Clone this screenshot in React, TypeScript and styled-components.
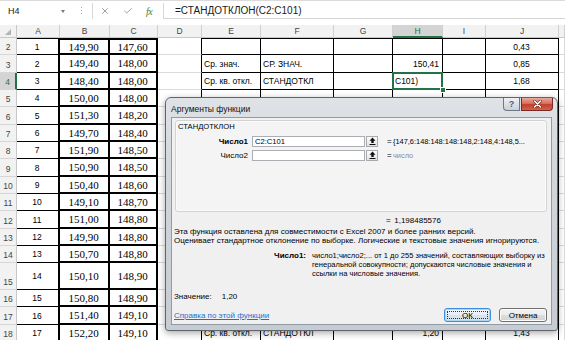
import React from "react";
import styled, { createGlobalStyle, css } from "styled-components";
import { X, Check } from "lucide-react";

const GlobalStyle = createGlobalStyle`
  html, body { margin: 0; padding: 0; background: #fff; }
  body { width: 565px; height: 340px; overflow: hidden; font-family: "Liberation Sans", Arial, sans-serif; }
  * { box-sizing: border-box; }
`;

const Screen = styled.div`
  position: relative;
  width: 565px;
  height: 340px;
  overflow: hidden;
  background: #fff;
  display: flex;
  flex-direction: column;
`;

/* ---------- formula bar ---------- */
const FormulaBar = styled.div`
  flex: none;
  height: 25px;
  display: flex;
  align-items: flex-start;
  padding-top: 2px;
  border-top: 1px solid #dadada;
  background: #fff;
`;
const NameBox = styled.div`
  width: 70px;
  height: 16px;
  display: flex;
  align-items: center;
  justify-content: space-between;
  padding: 0 5px 0 8px;
  font-size: 9px;
  color: #222;
`;
const DropArrow = styled.span`
  width: 0;
  height: 0;
  border-left: 2.5px solid transparent;
  border-right: 2.5px solid transparent;
  border-top: 3px solid #777;
`;
const Splitter = styled.div`
  width: 22px;
  height: 16px;
  display: flex;
  align-items: center;
  justify-content: center;
  &::before {
    content: "";
    width: 1px;
    height: 9px;
    background: repeating-linear-gradient(#a9a9a9 0 1px, transparent 1px 3px);
  }
`;
const FxBox = styled.div`
  width: 71px;
  height: 16px;
  display: flex;
  align-items: center;
  gap: 13px;
  padding-left: 7px;
  border-left: 1px solid #d6d6d6;
  color: #6f6f6f;
`;
const FxGlyph = styled.span`
  width: 11px;
  font-family: "Liberation Serif", serif;
  font-style: italic;
  font-size: 10px;
  color: #4d7a35;
  letter-spacing: -0.5px;
`;
const FormulaInput = styled.div`
  flex: 1;
  height: 16px;
  display: flex;
  align-items: center;
  padding-left: 11px;
  border-left: 1px solid #d6d6d6;
  border-bottom: 1px solid #d6d6d6;
  font-size: 10px;
  color: #1a1a1a;
`;

/* ---------- sheet ---------- */
const Grid = styled.div`
  display: grid;
  grid-template-columns: 17px 43px 50px 48px 44px 59px 73px 59px 50px 43px 73px 6px;
  grid-template-rows: 13px 17px 18px 17px 17px 18px 17px 17px 18px 17px 17px 18px 17px 17px 27px 17px 18px 17px;
`;

const HeaderBase = css`
  background: #f2f2f2;
  color: #444;
  font-size: 8.5px;
  display: flex;
  justify-content: center;
`;
const Corner = styled.div`
  ${HeaderBase};
  align-items: flex-end;
  justify-content: flex-end;
  padding: 0 5px 2px 0;
  border-right: 1px solid #c8c8c8;
  border-bottom: 1px solid #c8c8c8;
  &::after {
    content: "";
    width: 0;
    height: 0;
    border-left: 6px solid transparent;
    border-bottom: 6px solid #b4b4b4;
  }
`;
const ColHeader = styled.div<{ $active?: boolean }>`
  ${HeaderBase};
  align-items: center;
  border-right: 1px solid #d0d0d0;
  border-bottom: 1px solid #c8c8c8;
  ${(p) =>
    p.$active &&
    css`
      background: #d4d4d4;
      color: #217346;
      border-bottom: 2px solid #217346;
    `}
`;
const RowHeader = styled.div<{ $active?: boolean }>`
  ${HeaderBase};
  align-items: flex-end;
  padding-bottom: 2px;
  border-right: 1px solid #c8c8c8;
  border-bottom: 1px solid #d6d6d6;
  ${(p) =>
    p.$active &&
    css`
      background: #d4d4d4;
      color: #217346;
      border-right: 2px solid #217346;
    `}
`;

type Line = "grid" | "thin" | "thick" | "none";
const line = (b: Line) =>
  b === "thick" ? "2px solid #000" : b === "thin" ? "1px solid #000" : b === "grid" ? "1px solid #dadada" : "0";

const Cell = styled.div<{
  $r: Line;
  $b: Line;
  $t?: Line;
  $align?: "left" | "center" | "right";
  $serif?: boolean;
  $sel?: boolean;
}>`
  position: relative;
  display: flex;
  align-items: center;
  justify-content: ${(p) => (p.$align === "right" ? "flex-end" : p.$align === "center" ? "center" : "flex-start")};
  padding: 0 3px 0 2px;
  border-right: ${(p) => line(p.$r)};
  border-bottom: ${(p) => line(p.$b)};
  border-top: ${(p) => (p.$t ? line(p.$t) : "0")};
  font-family: ${(p) => (p.$serif ? '"Liberation Serif", "Times New Roman", serif' : '"Liberation Sans", Arial, sans-serif')};
  font-size: ${(p) => (p.$serif ? "11px" : "8.5px")};
  color: #000;
  white-space: nowrap;
  background: #fff;
  ${(p) =>
    p.$sel &&
    css`
      z-index: 1;
      &::after {
        content: "";
        position: absolute;
        left: -1px;
        top: -1px;
        right: -1px;
        bottom: -1px;
        border: 2px solid #217346;
        pointer-events: none;
      }
    `}
`;
const FillHandle = styled.span`
  position: absolute;
  right: -4px;
  bottom: -4px;
  width: 6px;
  height: 6px;
  background: #217346;
  border: 1px solid #fff;
  z-index: 2;
`;

/* ---------- dialog ---------- */
const Dialog = styled.div`
  position: absolute;
  left: 165px;
  top: 97px;
  width: 393px;
  height: 234px;
  border: 1px solid #5d646b;
  border-radius: 6px 6px 3px 3px;
  background: linear-gradient(to bottom, #dfe2e6 0%, #d2d7dc 30%, #c6ccd2 100%);
  box-shadow: 0 2px 7px rgba(0, 0, 0, 0.35);
  display: flex;
  flex-direction: column;
  padding: 0 5px 5px 5px;
  font-family: "Liberation Sans", Arial, sans-serif;
  font-size: 8px;
  color: #000;
  z-index: 5;
`;
const TitleBar = styled.div`
  height: 19px;
  flex: none;
  display: flex;
  align-items: flex-start;
  justify-content: space-between;
  margin-right: -1px;
`;
const Title = styled.div`
  padding: 6px 0 0 0;
  font-size: 8.5px;
  color: #111;
`;
const CaptionButtons = styled.div`
  display: flex;
  gap: 1px;
`;
const HelpBtn = styled.div`
  width: 17px;
  height: 13px;
  display: flex;
  align-items: center;
  justify-content: center;
  border: 1px solid #6e7884;
  border-top: 0;
  border-radius: 0 0 0 4px;
  background: linear-gradient(to bottom, #eef1f5, #c9d0d9);
  font-size: 9px;
  font-weight: bold;
  color: #56606c;
`;
const CloseBtn = styled.div`
  width: 32px;
  height: 13px;
  display: flex;
  align-items: center;
  justify-content: center;
  border: 1px solid #7a2a22;
  border-top: 0;
  border-radius: 0 0 4px 0;
  background: linear-gradient(to bottom, #e9a99c 0%, #d7715f 45%, #c2402b 55%, #d0634f 100%);
`;
const Client = styled.div`
  flex: 1;
  display: flex;
  flex-direction: column;
  border: 1px solid #8f9ba7;
  background: #f0f0f0;
`;
const GroupBox = styled.div`
  margin: 2px 4px 0 3px;
  height: 92px;
  flex: none;
  border: 1px solid #d3d3d3;
  border-radius: 3px;
  background: #f4f4f4;
  box-shadow: inset 0 0 0 1px #fbfbfb;
  padding-top: 1px;
`;
const GroupTitle = styled.div`
  height: 10px;
  line-height: 10px;
  padding-left: 2px;
  font-size: 7.6px;
`;
const ArgRow = styled.div`
  display: flex;
  align-items: center;
  height: 12px;
  margin-top: 3px;
  & + & {
    margin-top: 2px;
  }
`;
const ArgLabel = styled.div<{ $bold?: boolean }>`
  width: 72px;
  text-align: right;
  font-weight: ${(p) => (p.$bold ? "bold" : "normal")};
`;
const ArgInput = styled.div`
  margin-left: 4px;
  width: 113px;
  height: 11px;
  border: 1px solid #abadb3;
  background: #fff;
  padding-left: 2px;
  display: flex;
  align-items: center;
  font-size: 7.6px;
`;
const CollapseBtn = styled.div`
  margin-left: 1px;
  width: 12px;
  height: 11px;
  border: 1px solid #a7abb0;
  background: linear-gradient(to bottom, #fdfdfd, #e3e3e3);
  display: flex;
  align-items: center;
  justify-content: center;
`;
const Eq = styled.span`
  display: inline-block;
  width: 6px;
  margin-left: 9px;
`;
const ArgValue = styled.span<{ $muted?: boolean }>`
  color: ${(p) => (p.$muted ? "#8c8c8c" : "#000")};
  white-space: nowrap;
  font-size: 7.4px;
`;
const ResultLine = styled.div`
  margin-top: 4px;
  height: 10px;
  line-height: 10px;
  padding-left: 205px;
  display: flex;
`;
const Desc = styled.div`
  margin-top: 1px;
  padding-left: 2px;
  line-height: 9px;
  white-space: nowrap;
`;
const ArgHelp = styled.div`
  margin-top: 6px;
  display: grid;
  grid-template-columns: 134px 1fr;
  column-gap: 6px;
  line-height: 9px;
`;
const HelpLabel = styled.div`
  text-align: right;
  font-weight: bold;
`;
const HelpText = styled.div`
  display: flex;
  flex-direction: column;
  white-space: nowrap;
  font-size: 7.55px;
`;
const ValueLine = styled.div`
  margin-top: 14px;
  padding-left: 2px;
  height: 10px;
  line-height: 10px;
  display: flex;
`;
const ValueNum = styled.span`
  margin-left: 10px;
`;
const Footer = styled.div`
  margin-top: 6px;
  height: 14px;
  padding: 0 4px 0 2px;
  display: flex;
  align-items: center;
  justify-content: space-between;
`;
const HelpLink = styled.span`
  color: #1f6fcf;
  text-decoration: underline;
`;
const Buttons = styled.div`
  display: flex;
  gap: 8px;
`;
const DlgButton = styled.div<{ $default?: boolean }>`
  width: ${(p) => (p.$default ? "47px" : "48px")};
  height: 14px;
  border-radius: 3px;
  border: 1px solid ${(p) => (p.$default ? "#3c8fd8" : "#707070")};
  background: ${(p) =>
    p.$default
      ? "linear-gradient(to bottom, #f4f8fb 0%, #e6eef5 50%, #d8e4ee 51%, #d4e0ea 100%)"
      : "linear-gradient(to bottom, #f3f3f3 0%, #ebebeb 50%, #dddddd 51%, #d3d3d3 100%)"};
  box-shadow: ${(p) => (p.$default ? "inset 0 0 0 1px #a9d6f5" : "inset 0 0 0 1px #fcfcfc")};
  display: flex;
  align-items: center;
  justify-content: center;
  padding: 2px;
`;
const FocusRing = styled.div`
  flex: 1;
  align-self: stretch;
  border: 1px dotted #333;
  display: flex;
  align-items: center;
  justify-content: center;
`;

const CollapseIcon = () => (
  <svg width="7" height="8" viewBox="0 0 7 8">
    <path d="M3.5 0.5 L0.5 3.8 H2.3 V6 H4.7 V3.8 H6.5 Z" fill="#111" />
    <rect x="0.5" y="7" width="6" height="1" fill="#111" />
  </svg>
);

/* ---------- data ---------- */
const colLetters = ["A", "B", "C", "D", "E", "F", "G", "H", "I", "J"];
const B = ["149,90", "149,40", "148,40", "150,00", "151,30", "149,70", "151,90", "150,90", "150,40", "149,10", "151,00", "149,90", "150,70", "150,10", "150,80", "151,40", "152,20"];
const C = ["147,60", "148,00", "148,00", "148,00", "148,20", "148,40", "148,50", "148,50", "148,60", "148,70", "148,80", "148,80", "148,80", "148,90", "148,90", "149,10", "149,10"];
type Right = "E" | "F" | "G" | "H" | "I" | "J";
const extra: Record<number, Partial<Record<Right, string>>> = {
  2: { J: "0,43" },
  3: { E: "Ср. знач.", F: "СР. ЗНАЧ.", H: "150,41", J: "0,85" },
  4: { E: "Ср. кв. откл.", F: "СТАНДОТКЛ", H: "C101)", J: "1,68" },
  18: { E: "Ср. кв. откл.", F: "СТАНДОТКЛ", H: "1,20", J: "1,43" },
};
const alignOf: Record<Right, "left" | "center" | "right"> = { E: "left", F: "left", G: "left", H: "right", I: "left", J: "center" };
const rowsNums = Array.from({ length: 17 }, (_, i) => i + 2);

export default function App() {
  return (
    <Screen>
      <GlobalStyle />
      <FormulaBar>
        <NameBox>
          H4
          <DropArrow />
        </NameBox>
        <Splitter />
        <FxBox>
          <X size={10} strokeWidth={1.6} />
          <Check size={10} strokeWidth={1.6} />
          <FxGlyph>fx</FxGlyph>
        </FxBox>
        <FormulaInput>=СТАНДОТКЛОН(C2:C101)</FormulaInput>
      </FormulaBar>

      <Grid>
        <Corner />
        {colLetters.map((c) => (
          <ColHeader key={c} $active={c === "H"}>
            {c}
          </ColHeader>
        ))}
        <ColHeader />
        {rowsNums.map((r) => {
          const i = r - 2;
          const top = r === 2;
          const ex = extra[r] || {};
          return (
            <React.Fragment key={r}>
              <RowHeader $active={r === 4}>{r}</RowHeader>
              <Cell $r="thick" $b="thin" $t={top ? "thin" : undefined} $align="center">
                {r - 1}
              </Cell>
              <Cell $r="thick" $b="thick" $t={top ? "thick" : undefined} $align="center" $serif>
                {B[i]}
              </Cell>
              <Cell $r="thick" $b="thick" $t={top ? "thick" : undefined} $align="center" $serif>
                {C[i]}
              </Cell>
              <Cell $r="thin" $b="grid" />
              {(["E", "F", "G", "H", "I", "J"] as Right[]).map((c) => {
                const sel = r === 4 && c === "H";
                return (
                  <Cell key={c} $r="thin" $b="thin" $t={top ? "thin" : undefined} $align={sel ? "left" : alignOf[c]} $sel={sel}>
                    {ex[c]}
                    {sel && <FillHandle />}
                  </Cell>
                );
              })}
              <Cell $r="grid" $b="grid" />
            </React.Fragment>
          );
        })}
      </Grid>

      <Dialog>
        <TitleBar>
          <Title>Аргументы функции</Title>
          <CaptionButtons>
            <HelpBtn>?</HelpBtn>
            <CloseBtn>
              <svg width="9" height="8" viewBox="0 0 9 8">
                <path d="M1.5 1 L7.5 7 M7.5 1 L1.5 7" stroke="#5a1a12" strokeWidth="2.6" strokeLinecap="round" />
                <path d="M1.5 1 L7.5 7 M7.5 1 L1.5 7" stroke="#fff" strokeWidth="1.6" strokeLinecap="round" />
              </svg>
            </CloseBtn>
          </CaptionButtons>
        </TitleBar>
        <Client>
          <GroupBox>
            <GroupTitle>СТАНДОТКЛОН</GroupTitle>
            <ArgRow>
              <ArgLabel $bold>Число1</ArgLabel>
              <ArgInput>C2:C101</ArgInput>
              <CollapseBtn>
                <CollapseIcon />
              </CollapseBtn>
              <Eq>=</Eq>
              <ArgValue>{"{147,6:148:148:148:148,2:148,4:148,5..."}</ArgValue>
            </ArgRow>
            <ArgRow>
              <ArgLabel>Число2</ArgLabel>
              <ArgInput />
              <CollapseBtn>
                <CollapseIcon />
              </CollapseBtn>
              <Eq>=</Eq>
              <ArgValue $muted>число</ArgValue>
            </ArgRow>
          </GroupBox>
          <ResultLine>
            <Eq>=</Eq>
            <span>&nbsp;1,198485576</span>
          </ResultLine>
          <Desc>
            Эта функция оставлена для совместимости с Excel 2007 и более ранних версий.
            <br />
            Оценивает стандартное отклонение по выборке. Логические и текстовые значения игнорируются.
          </Desc>
          <ArgHelp>
            <HelpLabel>Число1:</HelpLabel>
            <HelpText>
              <span>число1;число2;... от 1 до 255 значений, составляющих выборку из</span>
              <span>генеральной совокупности; допускаются числовые значения и</span>
              <span>ссылки на числовые значения.</span>
            </HelpText>
          </ArgHelp>
          <ValueLine>
            <span>Значение:</span>
            <ValueNum>1,20</ValueNum>
          </ValueLine>
          <Footer>
            <HelpLink>Справка по этой функции</HelpLink>
            <Buttons>
              <DlgButton $default>
                <FocusRing>ОК</FocusRing>
              </DlgButton>
              <DlgButton>Отмена</DlgButton>
            </Buttons>
          </Footer>
        </Client>
      </Dialog>
    </Screen>
  );
}
